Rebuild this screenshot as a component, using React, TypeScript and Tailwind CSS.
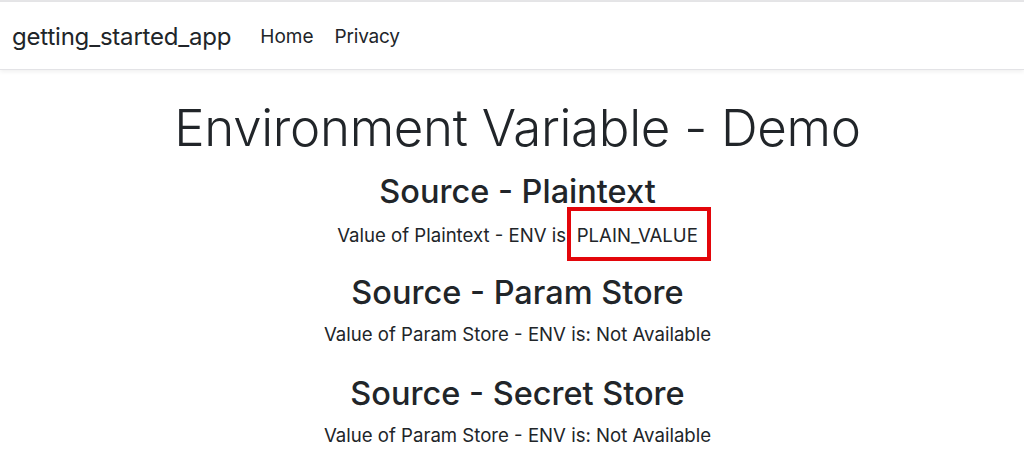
import React from "react";

const sections = [
  { title: "Source - Plaintext", label: "Value of Plaintext - ENV is:", value: "PLAIN_VALUE", boxed: true },
  { title: "Source - Param Store", label: "Value of Param Store - ENV is:", value: "Not Available" },
  { title: "Source - Secret Store", label: "Value of Param Store - ENV is:", value: "Not Available" },
];

const App = () => {
  return (
    <div className="min-h-[475px] bg-white text-[#212529] font-['Inter',sans-serif]">
      <div className="h-[2px] bg-[#e5e5e7]" />
      <nav className="flex h-[68px] items-center border-b border-[#e3e3e6] px-3 pt-[3px] shadow-[0_2px_4px_rgba(0,0,0,0.06)]">
        <span className="mr-[29px] text-[24px] tracking-[-0.2px]">getting_started_app</span>
        <a className="mr-[21px] text-[19px]">Home</a>
        <a className="text-[19px] tracking-[-0.2px]">Privacy</a>
      </nav>

      <main className="flex flex-col items-center pl-[11px] pt-[20px] text-center">
        <h1 className="mb-[6px] text-[51px] font-light leading-[76px] tracking-[-0.3px]">
          Environment Variable - Demo
        </h1>
        {sections.map((s, i) => (
          <section key={s.title} className="flex flex-col items-center">
            <h3 className="text-[32.5px] font-medium leading-[40px]">{s.title}</h3>
            <p
              className={`text-[18.6px] leading-[24px] ${i === 0 ? "mb-[26px] mt-[11px]" : "mb-[28px] mt-[9px]"}`}
            >
              {s.label}{" "}
              {s.boxed ? (
                <span className="relative">
                  {s.value}
                  <span className="pointer-events-none absolute -bottom-[15px] -left-[10px] -right-[13px] -top-[17px] border-[4px] border-[#e3060b]" />
                </span>
              ) : (
                s.value
              )}
            </p>
          </section>
        ))}
      </main>
    </div>
  );
};

export default App;
